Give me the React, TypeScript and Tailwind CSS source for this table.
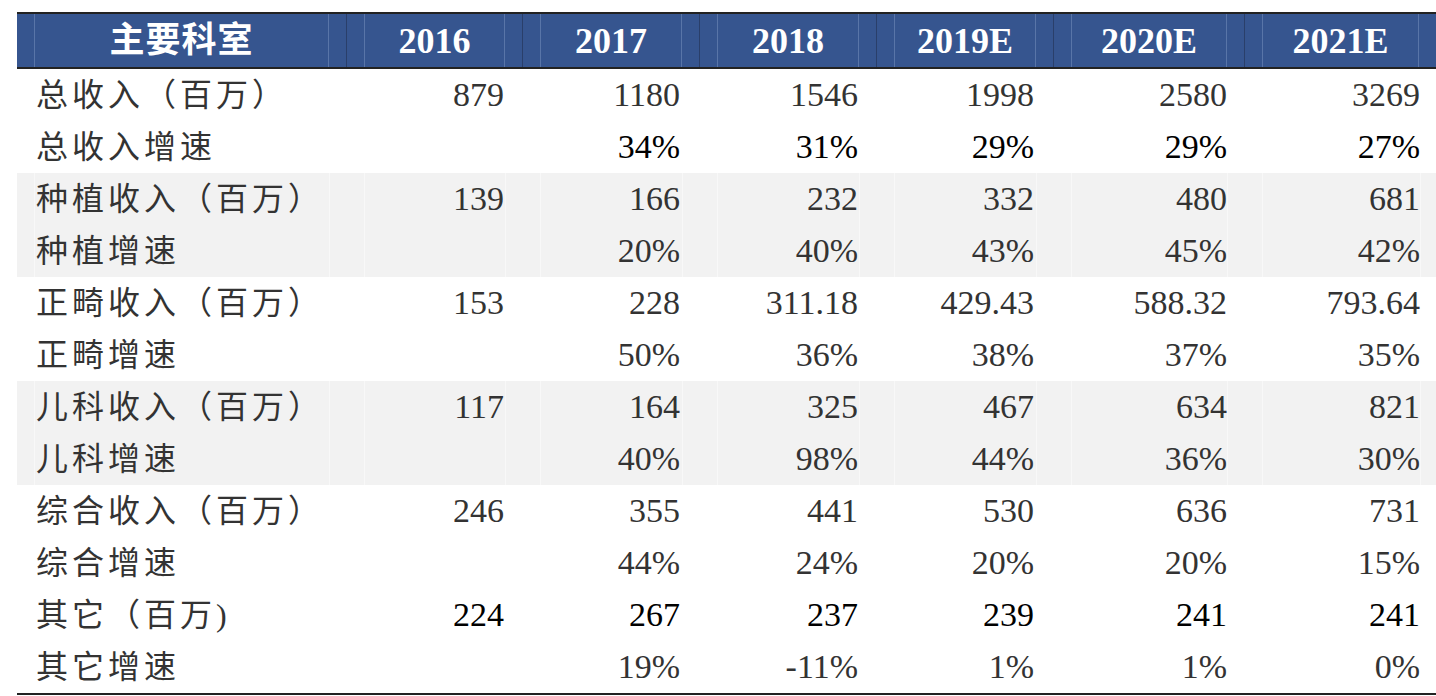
import React from 'react'

// 主要科室收入拆分表
const cols = ['2016', '2017', '2018', '2019E', '2020E', '2021E']
const pads = ['pr-[1px]', 'pr-[2px]', 'pr-[1px]', 'pr-[2px]', 'pr-[0px]', 'pr-[0px]']

interface Row {
  label:  string
  values: string[]
  shade?: boolean
  dark?:  boolean
}

const rows: Row[] = [
  { label: '总收入（百万）',   values: ['879', '1180', '1546', '1998', '2580', '3269'] },
  { label: '总收入增速',       values: ['', '34%', '31%', '29%', '29%', '27%'], dark: true },
  { label: '种植收入（百万）', values: ['139', '166', '232', '332', '480', '681'], shade: true },
  { label: '种植增速',         values: ['', '20%', '40%', '43%', '45%', '42%'], shade: true },
  { label: '正畸收入（百万）', values: ['153', '228', '311.18', '429.43', '588.32', '793.64'] },
  { label: '正畸增速',         values: ['', '50%', '36%', '38%', '37%', '35%'] },
  { label: '儿科收入（百万）', values: ['117', '164', '325', '467', '634', '821'], shade: true },
  { label: '儿科增速',         values: ['', '40%', '98%', '44%', '36%', '30%'], shade: true },
  { label: '综合收入（百万）', values: ['246', '355', '441', '530', '636', '731'] },
  { label: '综合增速',         values: ['', '44%', '24%', '20%', '20%', '15%'] },
  { label: '其它（百万)',      values: ['224', '267', '237', '239', '241', '241'], dark: true },
  { label: '其它增速',         values: ['', '19%', '-11%', '1%', '1%', '0%'] },
]

const grid = 'grid grid-cols-[330px_176px_177px_177px_177px_191px_191px]'
const font = { fontFamily: '"Liberation Serif", "Noto Sans CJK SC", serif' }

export default function App() {
  return (
    <div className="w-[1436px] h-[696px] bg-white pt-[12px] pl-[17px] overflow-hidden" style={font}>
      <div className="w-[1419px] border-t-2 border-b-2 border-[#222]">

        {/* Header */}
        <div className={`${grid} bg-[#36558f] border-b-2 border-[#222] h-[55px]`}>
          {['主要科室', ...cols].map((c, i) => (
            <div key={c} className={`px-[17px] h-full ${i < cols.length ? 'border-r border-[#2a3f6a]' : ''}`}>
              <div className={`h-full border-x border-[#5975a8] flex items-center justify-center text-white font-bold leading-none ${i === 0 ? 'text-[35px] tracking-[1px]' : 'text-[36px]'}`}>
                {c}
              </div>
            </div>
          ))}
        </div>

        {/* Body */}
        {rows.map(r => (
          <div key={r.label} className={`${grid} h-[52px] ${r.shade ? 'bg-[#f2f2f2]' : 'bg-white'}`}>
            <div className="px-[17px] h-full">
              <div className={`h-full border-x ${r.shade ? 'border-[#f8f8f8]' : 'border-transparent'} flex items-center pl-[1px] text-[32px] tracking-[4px] leading-none text-[#333]`}>
                {r.label}
              </div>
            </div>
            {r.values.map((v, i) => (
              <div key={i} className={`h-full ${i === 5 ? 'pl-[17px] pr-[15px]' : 'px-[17px]'}`}>
                <div className={`h-full border-x ${r.shade ? 'border-[#f8f8f8]' : 'border-transparent'} flex items-center justify-end ${pads[i]} text-[34px] leading-none ${r.dark ? 'text-black' : 'text-[#333]'}`}>
                  {v}
                </div>
              </div>
            ))}
          </div>
        ))}
      </div>
    </div>
  )
}
